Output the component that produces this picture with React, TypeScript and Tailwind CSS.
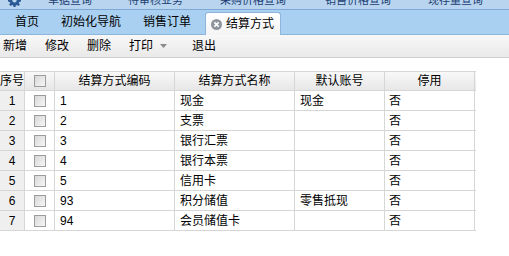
const topLinks = [
  { label: "单据查询", x: "ml-[27px]" },
  { label: "待审核业务", x: "ml-[36px]" },
  { label: "采购价格查询", x: "ml-[37px]" },
  { label: "销售价格查询", x: "ml-[39px]" },
  { label: "现存量查询", x: "ml-[37px]" },
]

const rows = [
  { no: 1, code: "1", name: "现金", account: "现金" },
  { no: 2, code: "2", name: "支票", account: "" },
  { no: 3, code: "3", name: "银行汇票", account: "" },
  { no: 4, code: "4", name: "银行本票", account: "" },
  { no: 5, code: "5", name: "信用卡", account: "" },
  { no: 6, code: "93", name: "积分储值", account: "零售抵现" },
  { no: 7, code: "94", name: "会员储值卡", account: "" },
]

function Gear() {
  return (
    <svg width="13" height="13" viewBox="0 0 16 16" className="mb-[2px] shrink-0">
      <path
        d="M6.8 0h2.4l.4 2.2 1.4.6 1.9-1.3 1.7 1.7-1.3 1.9.6 1.4 2.2.4v2.4l-2.2.4-.6 1.4 1.3 1.9-1.7 1.7-1.9-1.3-1.4.6-.4 2.2H6.8l-.4-2.2-1.4-.6-1.9 1.3-1.7-1.7 1.3-1.9-.6-1.4L0 9.2V6.8l2.2-.4.6-1.4-1.3-1.9 1.7-1.7 1.9 1.3 1.4-.6z"
        fill="#2c5a96"
      />
      <circle cx="8" cy="8" r="2.6" fill="#b7d3ee" />
    </svg>
  )
}

function Checkbox() {
  return (
    <div className="h-[12px] w-[12px] border border-[#9c9c9c] bg-gradient-to-br from-[#d8d8d8] to-[#f6f6f6]" />
  )
}

function CloseIcon() {
  return (
    <svg width="11" height="11" viewBox="0 0 11 11">
      <circle cx="5.5" cy="5.5" r="5.5" fill="#8f959c" />
      <path d="M3.4 3.4l4.2 4.2M7.6 3.4l-4.2 4.2" stroke="#fff" strokeWidth="1.6" />
    </svg>
  )
}

export default function App() {
  return (
    <div
      className="h-[256px] w-[509px] overflow-hidden bg-white text-[12px] text-black"
      style={{ fontFamily: '"Liberation Sans", "Noto Sans CJK SC", sans-serif' }}
    >
      {/* top nav, mostly scrolled out of view */}
      <div className="flex h-[10px] items-end overflow-hidden whitespace-nowrap border-b border-[#7ea8d5] bg-[#b8d4ef] pl-[8px] text-[11px] leading-none text-[#1d3f73]">
        <Gear />
        {topLinks.map((l) => (
          <span key={l.label} className={`${l.x} mb-[3px] shrink-0`}>
            {l.label}
          </span>
        ))}
      </div>

      {/* tabs */}
      <div className="flex h-[25px] items-end border-b border-[#8db4da] bg-[#a9d0f0] pl-[15px]">
        <div className="flex h-[24px] items-center">首页</div>
        <div className="ml-[22px] flex h-[24px] items-center">初始化导航</div>
        <div className="ml-[22px] flex h-[24px] items-center">销售订单</div>
        <div className="mb-[-1px] ml-[14px] flex h-[23px] w-[76px] items-center gap-[4px] rounded-t-[3px] border border-b-0 border-[#8db4da] bg-gradient-to-b from-white to-[#f4f4f4] pl-[5px]">
          <CloseIcon />
          <span>结算方式</span>
        </div>
      </div>

      {/* toolbar */}
      <div className="flex h-[23px] items-center border-b border-[#cfcfcf] bg-gradient-to-b from-[#f8f8f8] to-[#e9e9e9] pl-[3px]">
        <span>新增</span>
        <span className="ml-[18px]">修改</span>
        <span className="ml-[18px]">删除</span>
        <span className="ml-[18px] flex items-center">
          打印
          <svg width="7" height="4" viewBox="0 0 7 4" className="ml-[7px]">
            <path d="M0 0h7L3.5 4z" fill="#8a8a8a" />
          </svg>
        </span>
        <span className="ml-[25px]">退出</span>
      </div>

      {/* grid */}
      <div className="mt-[13px] w-[476px]">
        <div className="flex h-[20px] border-y border-[#d6d6d6] bg-gradient-to-b from-[#f8f8f8] to-[#e7e7e7]">
          <div className="flex w-[25px] items-center justify-center border-r border-[#d6d6d6]">序号</div>
          <div className="flex w-[30px] items-center justify-center border-r border-[#d6d6d6]">
            <Checkbox />
          </div>
          <div className="flex w-[120px] items-center justify-center border-r border-[#d6d6d6]">结算方式编码</div>
          <div className="flex w-[120px] items-center justify-center border-r border-[#d6d6d6]">结算方式名称</div>
          <div className="flex w-[90px] items-center justify-center border-r border-[#d6d6d6]">默认账号</div>
          <div className="flex w-[90px] items-center justify-center border-r border-[#d6d6d6]">停用</div>
        </div>
        {rows.map((r) => (
          <div key={r.no} className="flex h-[20px] border-b border-[#d6d6d6]">
            <div className="flex w-[25px] items-center justify-center border-r border-[#d6d6d6] bg-[#efefef]">{r.no}</div>
            <div className="flex w-[30px] items-center justify-center border-r border-[#d6d6d6]">
              <Checkbox />
            </div>
            <div className="flex w-[120px] items-center border-r border-[#d6d6d6] pl-[5px]">{r.code}</div>
            <div className="flex w-[120px] items-center border-r border-[#d6d6d6] pl-[5px]">{r.name}</div>
            <div className="flex w-[90px] items-center border-r border-[#d6d6d6] pl-[5px]">{r.account}</div>
            <div className="flex w-[90px] items-center border-r border-[#d6d6d6] pl-[4px]">否</div>
          </div>
        ))}
      </div>
    </div>
  )
}
